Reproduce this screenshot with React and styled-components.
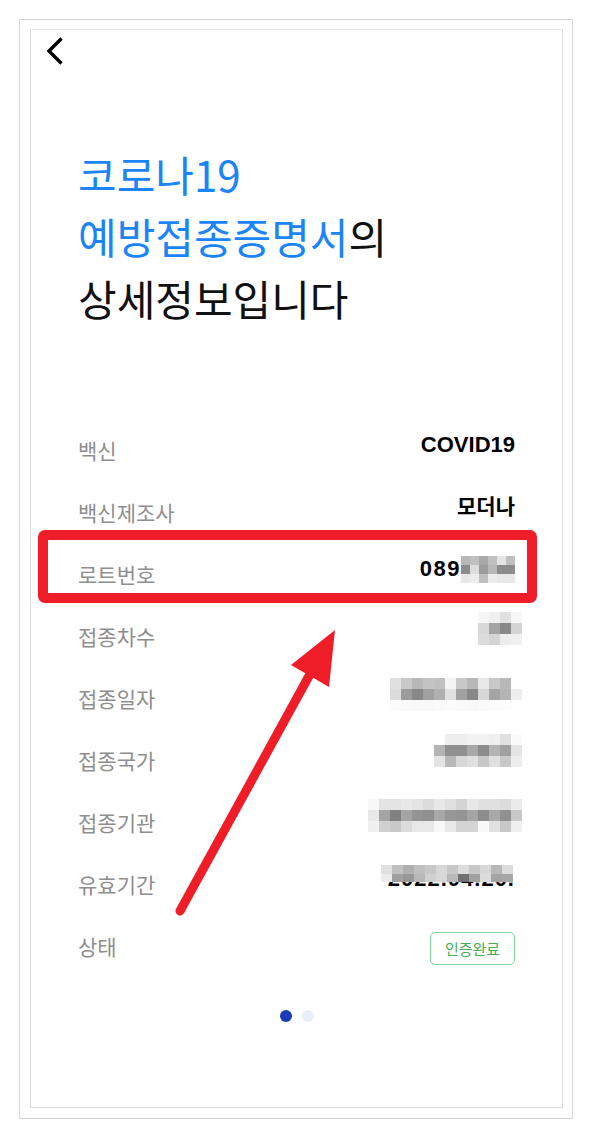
import React from "react";
import styled, { createGlobalStyle } from "styled-components";

const Global = createGlobalStyle`
  html, body { margin: 0; padding: 0; background: #ffffff; }
  body { font-family: "Noto Sans CJK KR", "Noto Sans", sans-serif; }
`;

const Page = styled.div`
  position: relative;
  width: 592px;
  height: 1138px;
  padding: 19px 0 0 19px;
  box-sizing: border-box;
`;

const OuterFrame = styled.div`
  position: relative;
  width: 554px;
  height: 1100px;
  box-sizing: border-box;
  border: 1px solid #d6d6d6;
  background: #ffffff;
  padding: 9px 9px 10px 10px;

  &::before {
    content: "";
    position: absolute;
    top: -7px;
    left: -7px;
    width: 150px;
    height: 130px;
    z-index: -1;
    background: radial-gradient(ellipse at 20% 10%, rgba(0, 0, 0, 0.36), rgba(0, 0, 0, 0) 70%);
    filter: blur(2px);
  }
  &::after {
    content: "";
    position: absolute;
    bottom: -8px;
    right: -7px;
    width: 170px;
    height: 170px;
    z-index: -1;
    background: radial-gradient(ellipse at 85% 92%, rgba(0, 0, 0, 0.32), rgba(0, 0, 0, 0) 70%);
    filter: blur(2px);
  }
`;

const Screen = styled.div`
  width: 533px;
  height: 1079px;
  box-sizing: border-box;
  border: 1px solid #dcdcdc;
  border-top-color: #e6e6e6;
  background: #ffffff;
  padding: 0 47px;
  display: flex;
  flex-direction: column;
`;

const Header = styled.div`
  height: 56px;
  display: flex;
  align-items: flex-start;
  padding-top: 6px;
  margin-left: -34px;
  box-sizing: border-box;
`;

const BackButton = styled.button`
  border: 0;
  background: none;
  padding: 0;
  width: 22px;
  height: 30px;
  display: flex;
  align-items: center;
  justify-content: center;
  cursor: pointer;
`;

const Title = styled.h1`
  margin: 57px 0 0;
  font-family: "Noto Sans CJK KR", sans-serif;
  font-weight: 400;
  font-size: 42px;
  line-height: 62px;
  color: #111111;
`;

const Blue = styled.span`
  color: #1b84f7;
`;

const List = styled.dl`
  margin: 87px 0 0;
  padding: 0;
  display: flex;
  flex-direction: column;
`;

const Row = styled.div`
  height: 62px;
  display: flex;
  align-items: center;
  justify-content: space-between;
`;

const Label = styled.dt`
  margin: 0;
  padding-top: 5px;
  font-family: "Noto Sans CJK KR", sans-serif;
  font-size: 21px;
  line-height: 28px;
  color: #8e8e8e;
`;

const Value = styled.dd`
  margin: 0;
  padding-bottom: 4px;
  display: flex;
  align-items: center;
  font-family: "Liberation Sans", "Noto Sans CJK KR", sans-serif;
  font-weight: 700;
  font-size: ${(p) => (p.$hangul ? "21px" : "22px")};
  line-height: 28px;
  color: #000000;
  letter-spacing: ${(p) => p.$spacing || "0"};
`;

const MosaicGrid = styled.div`
  display: grid;
  grid-template-columns: repeat(${(p) => p.$cols}, ${(p) => p.$w}px);
  grid-auto-rows: ${(p) => p.$h}px;
  margin-right: ${(p) => p.$right}px;
  margin-bottom: ${(p) => p.$lift}px;
`;

const Cell = styled.span`
  display: block;
`;

const Mosaic = ({ data, w = 11, h = 11, right = -7, lift = 0 }) => (
  <MosaicGrid $cols={data[0].length} $w={w} $h={h} $right={right} $lift={lift}>
    {data.flatMap((r, i) =>
      r.map((c, j) => <Cell key={i + "-" + j} style={{ background: "#" + c + c + c }} />)
    )}
  </MosaicGrid>
);

const Covered = styled.span`
  position: relative;
  display: inline-block;
`;

const CoverLayer = styled.span`
  position: absolute;
  top: 0;
  left: -7px;
`;

const Badge = styled.span`
  margin-top: 10px;
  width: 85px;
  height: 33px;
  box-sizing: border-box;
  border: 1.5px solid #80d59d;
  border-radius: 5px;
  display: flex;
  align-items: center;
  justify-content: center;
  font-family: "Noto Sans CJK KR", sans-serif;
  font-size: 15px;
  color: #45ad52;
`;

const Dots = styled.div`
  margin-top: 36px;
  display: flex;
  justify-content: center;
  gap: 10px;
`;

const Dot = styled.span`
  width: 12px;
  height: 12px;
  border-radius: 50%;
  background: ${(p) => (p.$active ? "#1a3db3" : "#e9effd")};
`;

const Annotation = styled.svg`
  position: absolute;
  top: 0;
  left: 0;
  pointer-events: none;
`;

const lot = [
  ["b8", "c0", "a8", "c0", "e4", "c0"],
  ["8c", "dc", "9c", "b8", "8c", "8c"],
  ["e8", "ec", "c0", "ec", "e8", "e8"],
];
const dose = [
  ["f6", "f0", "e0", "f6"],
  ["d8", "a4", "88", "d4"],
  ["dc", "d4", "ec", "f0"],
];
const date = [
  ["e0", "c8", "b8", "c4", "c0", "f4", "c8", "b8", "e8", "c8", "b8", "ff"],
  ["dc", "9c", "88", "a0", "b0", "e0", "a0", "88", "d8", "a4", "b4", "ee"],
  ["fc", "fa", "f8", "f8", "fa", "fc", "fa", "f8", "fa", "fc", "fc", "fe"],
];
const country = [
  ["ff", "ee", "ee", "f2", "f2", "f0", "e0", "fa"],
  ["b4", "90", "90", "a8", "8c", "b4", "a0", "e4"],
  ["e4", "b8", "d8", "e0", "c8", "e0", "c8", "ee"],
];
const agency = [
  ["f8", "e4", "e4", "e8", "e4", "dc", "e8", "e0", "d4", "e8", "e0", "e0", "dc", "ec"],
  ["e8", "a4", "80", "a4", "94", "90", "a8", "98", "94", "a4", "8c", "a8", "90", "c8"],
  ["f0", "d0", "c8", "dc", "e8", "e8", "f8", "e8", "d4", "d4", "f8", "e0", "c8", "f0"],
];
const expiry = [
  ["e0", "c0", "b0", "c0", "c8", "d8", "c8", "dc", "c8", "d8", "b8", "dc"],
  ["ec", "a0", "98", "b8", "d0", "d8", "b8", "70", "a0", "dc", "a4", "a8"],
];

export default function App() {
  return (
    <>
      <Global />
      <Page>
        <OuterFrame>
          <Screen>
            <Header>
              <BackButton aria-label="뒤로">
                <svg width="18" height="28" viewBox="0 0 18 28">
                  <path d="M15.5 1.5 L3 14 L15.5 26.5" fill="none" stroke="#000" strokeWidth="3.4" strokeLinecap="butt" strokeLinejoin="miter" />
                </svg>
              </BackButton>
            </Header>
            <Title>
              <Blue>코로나19</Blue>
              <br />
              <Blue>예방접종증명서</Blue>의
              <br />
              상세정보입니다
            </Title>
            <List>
              <Row>
                <Label>백신</Label>
                <Value>COVID19</Value>
              </Row>
              <Row>
                <Label>백신제조사</Label>
                <Value $hangul>모더나</Value>
              </Row>
              <Row>
                <Label>로트번호</Label>
                <Value $spacing="1.5px">
                  089
                  <Mosaic data={lot} w={9} h={9} right={0} />
                </Value>
              </Row>
              <Row>
                <Label>접종차수</Label>
                <Value>
                  <Mosaic data={dose} lift={5} />
                </Value>
              </Row>
              <Row>
                <Label>접종일자</Label>
                <Value>
                  <Mosaic data={date} lift={-3} />
                </Value>
              </Row>
              <Row>
                <Label>접종국가</Label>
                <Value>
                  <Mosaic data={country} lift={10} />
                </Value>
              </Row>
              <Row>
                <Label>접종기관</Label>
                <Value>
                  <Mosaic data={agency} lift={4} />
                </Value>
              </Row>
              <Row>
                <Label>유효기간</Label>
                <Value $spacing="1px">
                  <Covered>
                    2022.04.20.
                    <CoverLayer>
                      <Mosaic data={expiry} w={11} h={8.5} right={0} />
                    </CoverLayer>
                  </Covered>
                </Value>
              </Row>
              <Row>
                <Label>상태</Label>
                <Badge>인증완료</Badge>
              </Row>
            </List>
            <Dots>
              <Dot $active />
              <Dot />
            </Dots>
          </Screen>
        </OuterFrame>
        <Annotation width="592" height="1138" viewBox="0 0 592 1138">
          <rect x="43" y="535" width="489" height="63" rx="2" fill="none" stroke="#ee1d27" strokeWidth="10" />
          <line x1="180" y1="911" x2="309" y2="676" stroke="#ee1d27" strokeWidth="9" strokeLinecap="round" />
          <polygon points="335,630 329,687 291,665" fill="#ee1d27" />
        </Annotation>
      </Page>
    </>
  );
}
